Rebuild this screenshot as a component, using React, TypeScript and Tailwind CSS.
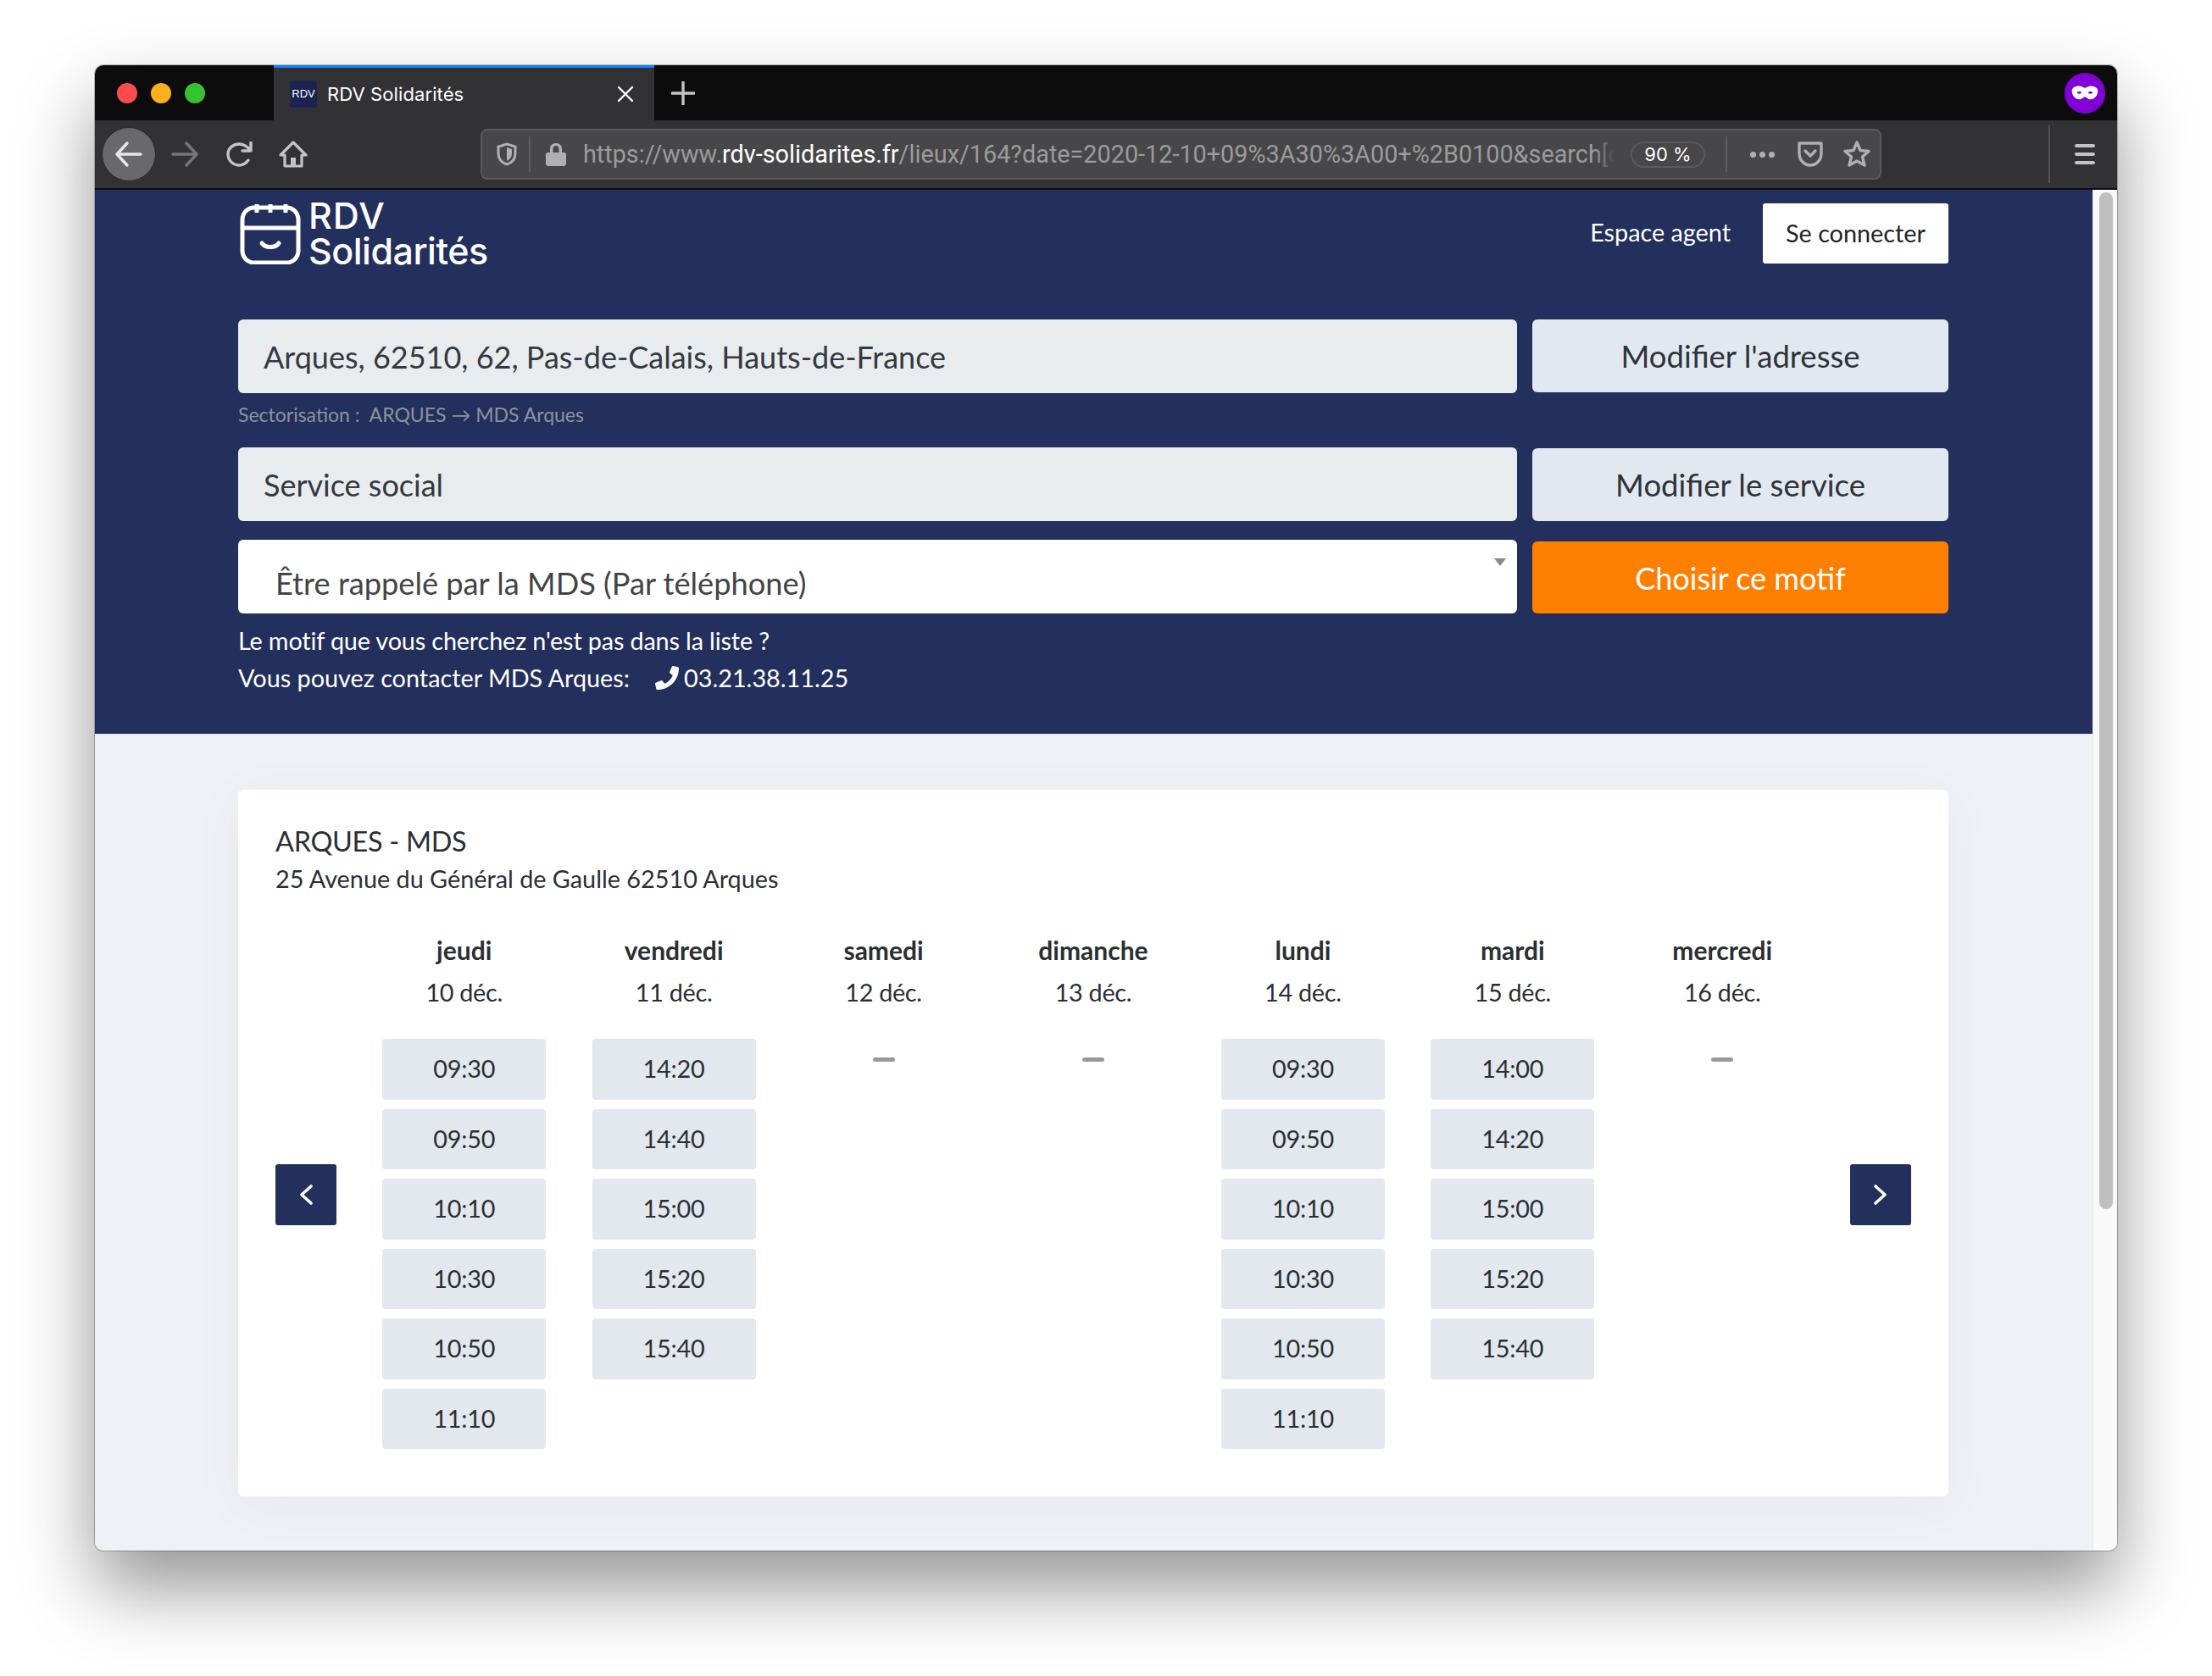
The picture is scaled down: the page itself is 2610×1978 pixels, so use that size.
import { FaPhone } from "react-icons/fa";

const days = [
  { name: "jeudi", date: "10 déc.", slots: ["09:30", "09:50", "10:10", "10:30", "10:50", "11:10"] },
  { name: "vendredi", date: "11 déc.", slots: ["14:20", "14:40", "15:00", "15:20", "15:40"] },
  { name: "samedi", date: "12 déc.", slots: [] },
  { name: "dimanche", date: "13 déc.", slots: [] },
  { name: "lundi", date: "14 déc.", slots: ["09:30", "09:50", "10:10", "10:30", "10:50", "11:10"] },
  { name: "mardi", date: "15 déc.", slots: ["14:00", "14:20", "15:00", "15:20", "15:40"] },
  { name: "mercredi", date: "16 déc.", slots: [] },
];

function Logo() {
  return (
    <svg className="ml-[2px]" width="72" height="73" viewBox="0 0 72 73" fill="none" stroke="white" strokeWidth="5" strokeLinecap="round">
      <rect x="3" y="6" width="66" height="65" rx="14" />
      <path d="M3 30H69M20 2V12M36 2V12M54 2V12" strokeLinecap="butt" />
      <path d="M26 48C30 54 42 54 46 48" />
    </svg>
  );
}

function TabStrip() {
  return (
    <div className="h-[65px] bg-[#0c0c0d] flex items-center shrink-0">
      <div className="w-[211px] h-full pl-[26px] flex items-center gap-[16px]">
        <div className="w-[24px] h-[24px] rounded-full bg-[#ff4b4b]" />
        <div className="w-[24px] h-[24px] rounded-full bg-[#fdb01d]" />
        <div className="w-[24px] h-[24px] rounded-full bg-[#36c22e]" />
      </div>
      <div className="w-[449px] h-full bg-[#323234] border-t-[3px] border-[#0a84ff] flex items-center pl-[19px]">
        <div className="w-[32px] h-[32px] rounded-[3px] bg-[#1b2352] flex items-center justify-center text-[13px] text-white font-['Liberation_Sans',sans-serif]">
          RDV
        </div>
        <span className="ml-[12px] text-[22px] text-white font-['Inter',sans-serif] tracking-[0.1px]">RDV Solidarités</span>
        <svg className="ml-auto mr-[24px]" width="20" height="20" viewBox="0 0 20 20" stroke="white" strokeWidth="2.4" strokeLinecap="round">
          <path d="M2 2L18 18M18 2L2 18" />
        </svg>
      </div>
      <svg className="ml-[20px]" width="28" height="28" viewBox="0 0 28 28" stroke="#c4c4c6" strokeWidth="3.4" strokeLinecap="round">
        <path d="M14 1V27M1 14H27" />
      </svg>
      <div className="ml-auto mr-[14px] w-[48px] h-[48px] rounded-full bg-[#8000d7] flex items-center justify-center">
        <svg width="32" height="17" viewBox="0 0 34 22" preserveAspectRatio="none">
          <path
            fillRule="evenodd"
            fill="white"
            d="M7 1C11 0 14 2 17 4C20 2 23 0 27 1C32 2 34 6 33 11C32 17 28 21 24 21C20 21 19 17 17 17C15 17 14 21 10 21C6 21 2 17 1 11C0 6 2 2 7 1ZM7 11C8 8.500 12 8.500 13 11C12 13 8 13 7 11ZM21 11C22 8.500 26 8.500 27 11C26 13 22 13 21 11Z"
          />
        </svg>
      </div>
    </div>
  );
}

function Toolbar() {
  return (
    <div className="h-[82px] bg-[#323234] border-b-[2px] border-[#0c0c0d] flex items-center shrink-0">
      <div className="ml-[8px] w-[64px] h-[64px] rounded-full bg-[#69696b] border border-[#29292b] flex items-center justify-center">
        <svg width="34" height="30" viewBox="0 0 34 30" fill="none" stroke="#e6e6e7" strokeWidth="3.4" strokeLinecap="round" strokeLinejoin="round">
          <path d="M31 15H3M15 2L3 15L15 28" />
        </svg>
      </div>
      <div className="w-[68px] flex justify-center">
        <svg width="34" height="30" viewBox="0 0 34 30" fill="none" stroke="#77777a" strokeWidth="3.4" strokeLinecap="round" strokeLinejoin="round">
          <path d="M3 15H31M19 2L31 15L19 28" />
        </svg>
      </div>
      <div className="w-[62px] flex justify-center">
        <svg width="32" height="30" viewBox="0 0 32 30" fill="none" stroke="#c4c4c6" strokeWidth="3.4" strokeLinecap="round" strokeLinejoin="round">
          <path d="M26 22C23 26 19 28 15 28C8 28 2 22 2 15C2 8 8 3 15 3C20 3 24 5 28 10" />
          <path d="M29 1V11H19" />
        </svg>
      </div>
      <div className="w-[64px] flex justify-center">
        <svg width="34" height="32" viewBox="0 0 34 32" fill="none" stroke="#c4c4c6" strokeWidth="3.2" strokeLinejoin="round">
          <path d="M17 2L32 17H27V30H7V17H2Z" />
          <rect x="14" y="20" width="6" height="10" fill="#c4c4c6" stroke="none" />
        </svg>
      </div>
      <div className="ml-[189px] w-[1653px] h-[60px] rounded-[8px] bg-[#474749] border-[2px] border-[#5a5a5c] flex items-center">
        <svg className="ml-[17px]" width="24" height="28" viewBox="0 0 24 28" fill="none">
          <path d="M12 2L22 5V13C22 20 18 24 12 26C6 24 2 20 2 13V5Z" stroke="#b0b0b2" strokeWidth="3" />
          <path d="M12 6L18 8V13C18 17 16 20 12 22Z" fill="#b0b0b2" />
        </svg>
        <div className="ml-[14px] w-[2px] h-[42px] bg-[#5f5f63]" />
        <svg className="ml-[18px]" width="24" height="28" viewBox="0 0 24 28" fill="#b0b0b2">
          <path d="M2 12H5V8C5 3 8 1 12 1C16 1 19 3 19 8V12H22C23 12 24 13 24 14V25C24 26.500 23 28 21 28H3C1 28 0 26.500 0 25V14C0 13 1 12 2 12ZM8.500 12H15.500V8C15.500 5 14 4 12 4C10 4 8.500 5 8.500 8Z" />
        </svg>
        <div className="relative ml-[20px] mt-[2px] w-[1217px] overflow-hidden whitespace-nowrap text-[28.800px] font-['Roboto',sans-serif] text-[#9b9b9d]">
          https://www.<span className="text-white">rdv-solidarites.fr</span>/lieux/164?date=2020-12-10+09%3A30%3A00+%2B0100&search[departement]=62
          <div className="absolute right-0 top-0 h-full w-[24px] bg-gradient-to-r from-transparent to-[#474749]" />
        </div>
        <div className="ml-[19px] w-[88px] h-[31px] rounded-full border-[2px] border-[#5a5a5c] flex items-center justify-center text-[22px] text-white font-['Inter',sans-serif]">
          90 %
        </div>
        <div className="ml-[24px] w-[2px] h-[42px] bg-[#5f5f63]" />
        <div className="ml-[27px] flex gap-[4px]">
          <div className="w-[7px] h-[7px] rounded-full bg-[#b0b0b2]" />
          <div className="w-[7px] h-[7px] rounded-full bg-[#b0b0b2]" />
          <div className="w-[7px] h-[7px] rounded-full bg-[#b0b0b2]" />
        </div>
        <svg className="ml-[26px]" width="32" height="30" viewBox="0 0 32 30" fill="none" stroke="#b0b0b2" strokeWidth="3.4" strokeLinecap="round" strokeLinejoin="round">
          <path d="M3 2H29V14C29 22 23 28 16 28C9 28 3 22 3 14Z" />
          <path d="M10 11L16 17L22 11" />
        </svg>
        <svg className="ml-[23px]" width="32" height="32" viewBox="0 0 32 32" fill="none" stroke="#b0b0b2" strokeWidth="3.4" strokeLinejoin="round">
          <path d="M16 2L20 11.500L30 12.500L22.500 19L25 29L16 24L7 29L9.500 19L2 12.500L12 11.500Z" />
        </svg>
      </div>
      <div className="ml-[197px] w-[2px] h-[68px] bg-[#525256]" />
      <div className="ml-[29px] w-[24px] flex flex-col gap-[6px]">
        <div className="h-[4px] rounded-full bg-[#c4c4c6]" />
        <div className="h-[4px] rounded-full bg-[#c4c4c6]" />
        <div className="h-[4px] rounded-full bg-[#c4c4c6]" />
      </div>
    </div>
  );
}

function Header() {
  return (
    <div className="h-[642px] bg-[#232f5c] pt-[15px] pl-[169px] pr-[170px] font-['Lato',sans-serif]">
      <div className="flex justify-between items-start h-[72px] mb-[66px]">
        <div className="flex items-start">
          <Logo />
          <div className="ml-[9px] -mt-[6px] text-[43px] leading-[42px] font-medium text-white font-['Inter',sans-serif] tracking-[-0.5px]">
            <div className="tracking-[1px]">RDV</div>
            <div>Solidarités</div>
          </div>
        </div>
        <div className="flex items-center">
          <span className="text-[28.800px] text-white">Espace agent</span>
          <button className="ml-[38px] w-[219px] h-[71px] mt-[1px] rounded-[3px] bg-white text-[28.800px] text-[#212529]">
            Se connecter
          </button>
        </div>
      </div>

      <div className="flex gap-[18px] items-start">
        <div className="flex-1 h-[87px] rounded-[6px] bg-[#e9ecef] pl-[30px] flex items-center text-[36px] text-[#343a40]">
          Arques, 62510, 62, Pas-de-Calais, Hauts-de-France
        </div>
        <button className="w-[491px] h-[86px] rounded-[6px] bg-[#e2e8f0] text-[36.500px] text-[#2e3338]">
          Modifier l'adresse
        </button>
      </div>
      <div className="h-[50px] mb-[14px] flex items-center text-[23px] text-[#8f929c]">
        Sectorisation :&nbsp; ARQUES → MDS Arques
      </div>

      <div className="flex gap-[18px] items-end mb-[22px]">
        <div className="flex-1 h-[87px] rounded-[6px] bg-[#e9ecef] pl-[30px] flex items-center text-[36px] text-[#343a40]">
          Service social
        </div>
        <button className="w-[491px] h-[86px] rounded-[6px] bg-[#e2e8f0] text-[36.500px] text-[#2e3338]">
          Modifier le service
        </button>
      </div>

      <div className="flex gap-[18px] items-end">
        <div className="relative flex-1 h-[87px] rounded-[6px] bg-white pl-[44px] pt-[15px] flex items-center text-[36.200px] text-[#444444]">
          Être rappelé par la MDS (Par téléphone)
          <div className="absolute right-[13px] top-[22px] w-0 h-0 border-x-[7px] border-x-transparent border-t-[9px] border-t-[#888888]" />
        </div>
        <button className="w-[491px] h-[85px] rounded-[6px] bg-[#ff7f00] text-[36px] text-white">
          Choisir ce motif
        </button>
      </div>

      <div className="mt-[11px] text-[28.800px] leading-[43.500px] text-white">
        <div className="tracking-[-0.15px]">Le motif que vous cherchez n'est pas dans la liste ?</div>
        <div className="flex items-center">
          Vous pouvez contacter MDS Arques:
          <FaPhone className="ml-[30px] w-[28px] h-[28px] text-white" />
          <span className="ml-[6px]">03.21.38.11.25</span>
        </div>
      </div>
    </div>
  );
}

function ArrowButton({ dir }: { dir: "left" | "right" }) {
  return (
    <button className="w-[72px] h-[72px] shrink-0 rounded-[3px] bg-[#232f5c] flex items-center justify-center">
      <svg width="16" height="24" viewBox="0 0 16 24" fill="none" stroke="white" strokeWidth="3.600" strokeLinecap="round" strokeLinejoin="round">
        <path d={dir === "left" ? "M14 2L3 12L14 22" : "M2 2L13 12L2 22"} />
      </svg>
    </button>
  );
}

function Card() {
  return (
    <div className="h-[834px] rounded-[6px] bg-white px-[44px] pt-[39px] shadow-[0_10px_60px_rgba(60,70,100,0.05)] font-['Lato',sans-serif] text-[#2b2f33]">
      <div className="text-[32.400px] leading-[44px] tracking-[-0.3px]">ARQUES - MDS</div>
      <div className="text-[28.800px] leading-[44px]">25 Avenue du Général de Gaulle 62510 Arques</div>
      <div className="mt-[39px] flex items-center">
        <ArrowButton dir="left" />
        <div className="mx-[27px] flex-1 flex items-start">
          {days.map((d) => (
            <div key={d.name} className="flex-1 flex flex-col items-center min-h-[619px]">
              <div className="h-[47px] mb-[3px] flex items-center text-[30px] font-bold">{d.name}</div>
              <div className="h-[48px] flex items-center text-[28.800px] tracking-[-0.3px]">{d.date}</div>
              <div className="mt-[30px]">
                {d.slots.length === 0 && <div className="mt-[22px] w-[26px] h-[5px] rounded-full bg-[#999999]" />}
                {d.slots.map((s) => (
                  <div key={s} className="w-[193px] h-[71.500px] mb-[11px] rounded-[4px] bg-[#e2e8ee] flex items-center justify-center text-[28.800px] tracking-[-0.2px]">
                    {s}
                  </div>
                ))}
              </div>
            </div>
          ))}
        </div>
        <ArrowButton dir="right" />
      </div>
    </div>
  );
}

export default function App() {
  return (
    <div className="h-[1978px] overflow-hidden bg-white pt-[77px] pl-[112px]">
      <div className="w-[2386px] h-[1753px] rounded-[10px] overflow-hidden shadow-[0_44px_88px_rgba(0,0,0,0.42),0_0_0_1px_rgba(0,0,0,0.25)] flex flex-col">
        <TabStrip />
        <Toolbar />
        <div className="flex-1 flex min-h-0">
          <div className="flex-1 bg-[#eff1f6]">
            <Header />
            <div className="pt-[66px] pl-[169px] pr-[170px]">
              <Card />
            </div>
          </div>
          <div className="w-[29px] bg-[#f9f9f9] border-l border-[#e8e8ea] pt-[3px] pl-[7px]">
            <div className="w-[16px] h-[1200px] rounded-full bg-[#bfbfbf]" />
          </div>
        </div>
      </div>
    </div>
  );
}
